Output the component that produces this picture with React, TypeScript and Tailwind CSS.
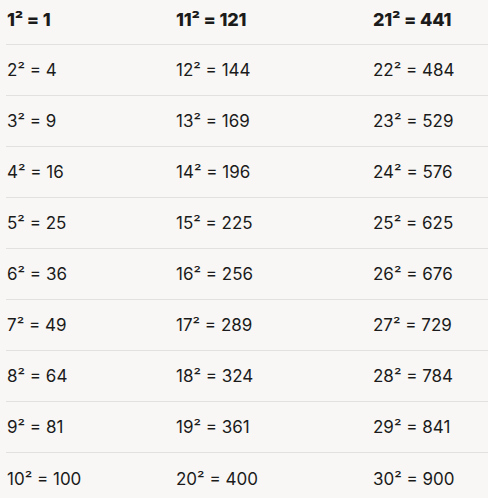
const rows = Array.from({ length: 10 }, (_, i) => [i + 1, i + 11, i + 21]);

function Cell({ n, bold }: { n: number; bold?: boolean }) {
  return (
    <span className={bold ? 'font-extrabold text-[18px] tracking-[-0.01em]' : 'font-normal'}>
      {n}² = {n * n}
    </span>
  );
}

export default function App() {
  return (
    <div className="w-[488px] h-[498px] overflow-hidden bg-[#f8f7f5] text-[#1b1b1b] font-['Inter',sans-serif] text-[17px]">
      <div className="ml-[6px]">
        {rows.map((r, i) => (
          <div
            key={i}
            className={`grid grid-cols-[169px_197px_1fr] items-center pl-[1px] ${
              i === 0 ? 'h-[45px] pb-[6px]' : 'h-[51px] pt-[2px]'
            } ${i < rows.length - 1 ? 'border-b border-[#e2e1df]' : ''}`}
          >
            {r.map(n => (
              <Cell key={n} n={n} bold={i === 0} />
            ))}
          </div>
        ))}
      </div>
    </div>
  );
}
